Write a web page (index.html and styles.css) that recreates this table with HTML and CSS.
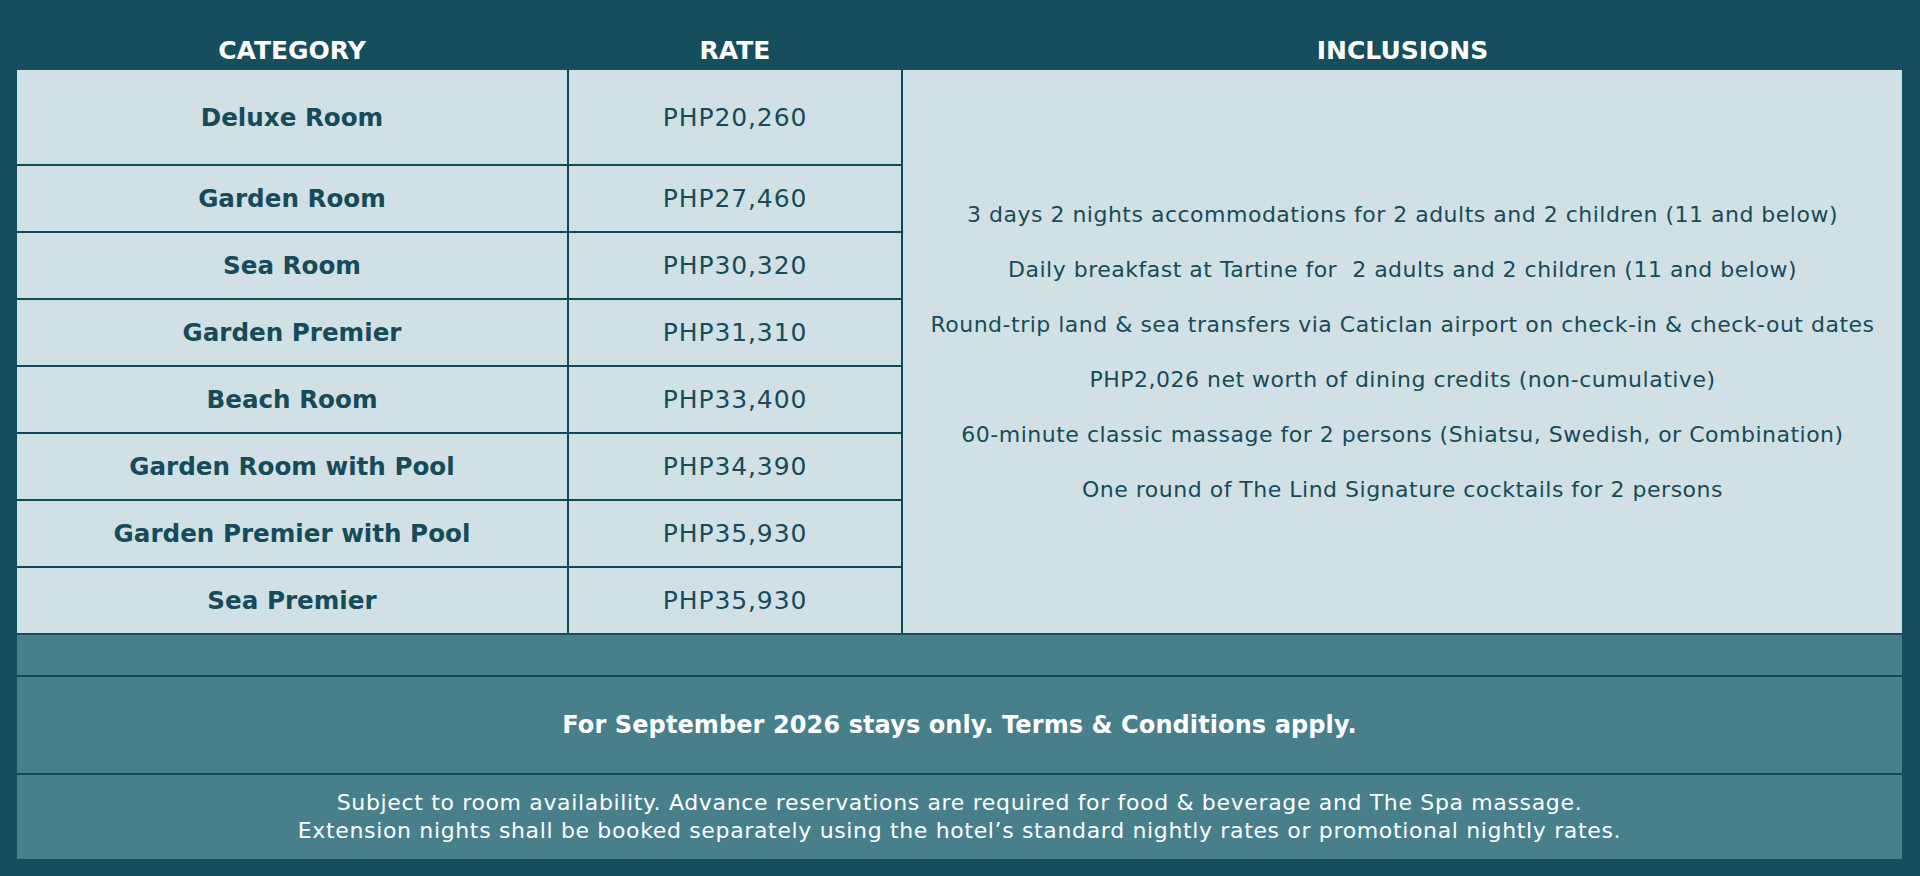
FILE: index.html
```html
<!DOCTYPE html>
<html lang="en">
<head>
<meta charset="utf-8">
<title>September 2026 Rates</title>
<link rel="stylesheet" href="styles.css">
</head>
<body>
<div class="card">
  <div class="head">
    <div class="hcell">CATEGORY</div>
    <div class="hcell">RATE</div>
    <div class="hcell">INCLUSIONS</div>
  </div>
  <div class="grid">
    <div class="cell cat">Deluxe Room</div>
    <div class="cell rate">PHP20,260</div>
    <div class="cell incl">
      <p>3 days 2 nights accommodations for 2 adults and 2 children (11 and below)</p>
      <p>Daily breakfast at Tartine for&nbsp; 2 adults and 2 children (11 and below)</p>
      <p>Round-trip land &amp; sea transfers via Caticlan airport on check-in &amp; check-out dates</p>
      <p>PHP2,026 net worth of dining credits (non-cumulative)</p>
      <p>60-minute classic massage for 2 persons (Shiatsu, Swedish, or Combination)</p>
      <p>One round of The Lind Signature cocktails for 2 persons</p>
    </div>
    <div class="cell cat">Garden Room</div>
    <div class="cell rate">PHP27,460</div>
    <div class="cell cat">Sea Room</div>
    <div class="cell rate">PHP30,320</div>
    <div class="cell cat">Garden Premier</div>
    <div class="cell rate">PHP31,310</div>
    <div class="cell cat">Beach Room</div>
    <div class="cell rate">PHP33,400</div>
    <div class="cell cat">Garden Room with Pool</div>
    <div class="cell rate">PHP34,390</div>
    <div class="cell cat">Garden Premier with Pool</div>
    <div class="cell rate">PHP35,930</div>
    <div class="cell cat">Sea Premier</div>
    <div class="cell rate">PHP35,930</div>
  </div>
  <div class="foot">
    <div class="frow empty"></div>
    <div class="frow strong">For September 2026 stays only. Terms &amp; Conditions apply.</div>
    <div class="frow note">Subject to room availability. Advance reservations are required for food &amp; beverage and The Spa massage.<br>Extension nights shall be booked separately using the hotel’s standard nightly rates or promotional nightly rates.</div>
  </div>
</div>
</body>
</html>
```

FILE: styles.css
```css
* { box-sizing: border-box; }
html, body { margin: 0; padding: 0; }
body {
  background: #154e5c;
  font-family: "DejaVu Sans", "Liberation Sans", sans-serif;
}
.card {
  width: 1920px;
  height: 876px;
  background: #154e5c;
  padding: 0 18px 17px 17px;
  display: flex;
  flex-direction: column;
}
.head {
  height: 70px;
  display: grid;
  grid-template-columns: 550px 332px 1fr;
  column-gap: 2px;
  align-items: end;
  padding-bottom: 5px;
}
.hcell {
  color: #ffffff;
  font-weight: 700;
  font-size: 25px;
  line-height: 28px;
  text-align: center;
}
.grid {
  display: grid;
  grid-template-columns: 550px 332px 1fr;
  grid-template-rows: 94px repeat(7, 65px);
  gap: 2px;
  background: #124958;
}
.cell {
  background: #d1e0e4;
  color: #164b59;
  display: flex;
  align-items: center;
  justify-content: center;
  text-align: center;
}
.cat {
  font-weight: 700;
  font-size: 24.6px;
}
.rate {
  font-size: 25px;
  letter-spacing: 0.9px;
}
.incl {
  grid-column: 3;
  grid-row: 1 / span 8;
  flex-direction: column;
  font-size: 22px;
  letter-spacing: 0.5px;
}
.incl p {
  margin: 0;
  line-height: 55px;
}
.foot {
  display: flex;
  flex-direction: column;
  gap: 2px;
  margin-top: 2px;
  background: #124958;
}
.frow {
  background: #477f8b;
  color: #ffffff;
  display: flex;
  align-items: center;
  justify-content: center;
  text-align: center;
}
.empty { height: 40px; }
.strong {
  height: 96px;
  font-weight: 700;
  font-size: 24px;
  letter-spacing: 0.1px;
}
.note {
  height: 84px;
  font-size: 22px;
  letter-spacing: 0.65px;
  line-height: 28px;
}
```
